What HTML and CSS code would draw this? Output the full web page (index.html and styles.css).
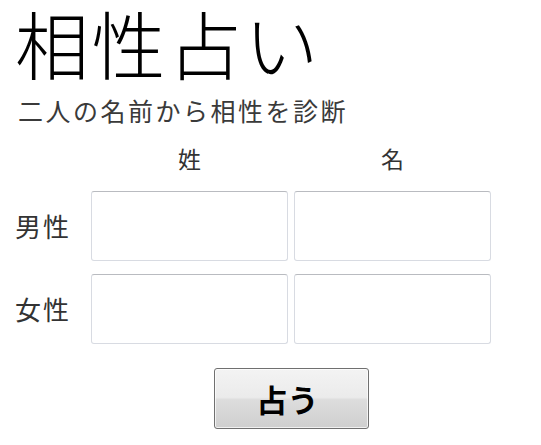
FILE: index.html
```html
<!DOCTYPE html>
<html lang="ja">
<head>
<meta charset="utf-8">
<title>相性占い</title>
<link rel="stylesheet" href="styles.css">
</head>
<body>
<div class="page">
  <h1 class="title">相性占い</h1>
  <p class="subtitle">二人の名前から相性を診断</p>
  <div class="form">
    <div class="cell"></div>
    <div class="head">姓</div>
    <div class="head">名</div>
    <div class="label">男性</div>
    <input class="field" type="text">
    <input class="field" type="text">
    <div class="label">女性</div>
    <input class="field" type="text">
    <input class="field" type="text">
  </div>
  <div class="actions">
    <button class="btn" type="button">占う</button>
  </div>
</div>
</body>
</html>
```
FILE: styles.css
```css
* { box-sizing: border-box; }
html, body { margin: 0; padding: 0; background: #fff; }
body {
  font-family: "Noto Sans CJK JP", "Noto Sans", sans-serif;
  font-kerning: none;
  font-feature-settings: "kern" 0, "palt" 0;
  color: #222;
}
.page { padding: 1px 0 0 15px; }
.title {
  margin: 0;
  font-size: 74px;
  line-height: 82px;
  font-weight: 300;
  letter-spacing: 2.5px;
  color: #000;
}
.subtitle {
  margin: 12px 0 0 3px;
  font-size: 25px;
  line-height: 30px;
  letter-spacing: 2.5px;
  color: #3a3a3a;
}
.form {
  display: grid;
  grid-template-columns: 70px 197px 197px;
  column-gap: 6px;
  row-gap: 13px;
  margin-top: 19px;
  align-items: center;
}
.head {
  text-align: center;
  font-size: 23px;
  line-height: 28px;
  color: #333;
  margin-bottom: 6px;
}
.label {
  font-size: 26px;
  line-height: 30px;
  letter-spacing: 2px;
  color: #333;
}
.field {
  height: 70px;
  width: 197px;
  margin: 0;
  border: 1px solid #d8dbe2;
  border-top-color: #b9bbc0;
  border-radius: 3px;
  background: #fff;
}
.actions {
  display: flex;
  padding-left: 199px;
  margin-top: 24px;
}
.btn {
  width: 155px;
  height: 61px;
  border: 1px solid #707070;
  border-radius: 3px;
  background: linear-gradient(#f3f3f3 0%, #ebebeb 48%, #dddddd 52%, #cfcfcf 100%);
  box-shadow: inset 0 0 0 1px rgba(255,255,255,0.7);
  font-family: "Noto Sans CJK JP", sans-serif;
  font-weight: 700;
  font-size: 31px;
  line-height: 40px;
  color: #000;
  padding: 0 8px 0 0;
}
```
